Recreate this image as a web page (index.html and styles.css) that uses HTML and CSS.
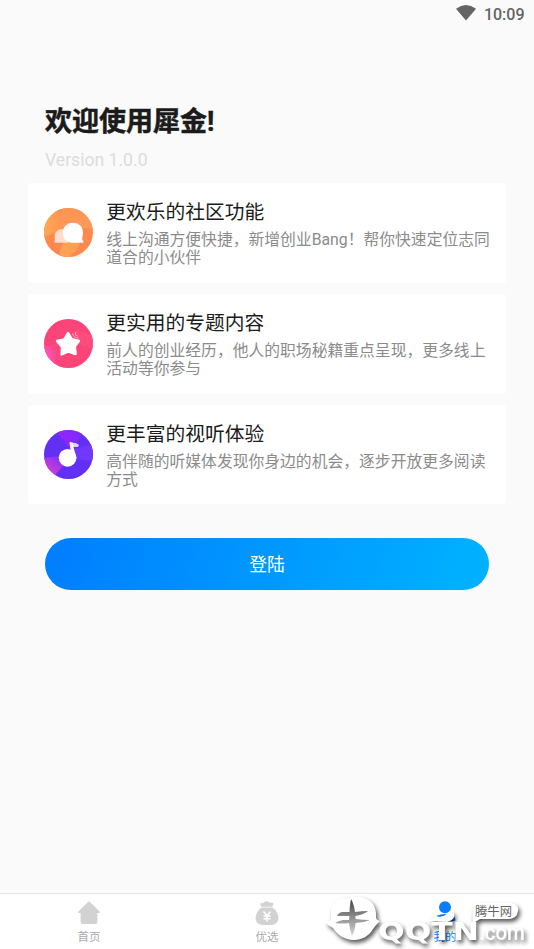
FILE: index.html
```html
<!DOCTYPE html>
<html lang="zh-CN">
<head>
<meta charset="utf-8">
<title>欢迎使用犀金</title>
<link rel="stylesheet" href="styles.css">
</head>
<body>
<div class="screen">
  <header class="status">
    <svg class="wifi" width="20" height="16" viewBox="0 0 20 16"><path d="M0 3.7Q10-3.7 20 3.7L10 15.6Z" fill="#646464"/></svg>
    <span>10:09</span>
  </header>
  <main class="content">
    <h1 class="title">欢迎使用犀金!</h1>
    <p class="version">Version 1.0.0</p>
    <section class="cards">
      <article class="card">
        <svg class="card-icon" viewBox="0 0 49 49">
          <defs>
            <clipPath id="disc"><circle cx="24.5" cy="24.5" r="24.5"/></clipPath>
            <linearGradient id="orangeA" x1="0" y1="0" x2="1" y2="0"><stop offset="0" stop-color="#ffa755"/><stop offset="1" stop-color="#ff9650"/></linearGradient>
            <linearGradient id="orangeB" x1="0" y1="0" x2="0" y2="1"><stop offset="0" stop-color="#ff9352"/><stop offset="1" stop-color="#ff9a5c"/></linearGradient>
          </defs>
          <g clip-path="url(#disc)">
            <path d="M0 0H49V49H0Z" fill="#ff884f"/>
            <path d="M0 0H11Q19 10 19 22L0 29Z" fill="url(#orangeA)"/>
            <path d="M11 0H49V21Q35 18 19 22Q18 9 11 0Z" fill="url(#orangeB)"/>
            <path d="M20 34H36Q33 44 25 49H15Q16 40 20 34Z" fill="#ffa152"/>
          </g>
          <path d="M11 34.8Q9.6 34.4 10.8 32.6V28.5C10.5 24.5 13.5 21.3 17.5 21.3C21.5 21.3 24 24 24 28V34.8Z" fill="#ffdccb"/>
          <path d="M29 14.8C35 14.8 39 19 39 24.8C39 27 38.2 29.5 38.2 31Q38.4 32.2 39.6 33.6Q40 34.8 38.4 34.8H28.5C22.5 34.8 18.8 30.5 18.8 25C18.8 19 23 14.8 29 14.8Z" fill="#fff"/>
        </svg>
        <div class="card-text"><h2>更欢乐的社区功能</h2><p>线上沟通方便快捷，新增创业Bang！帮你快速定位志同<br>道合的小伙伴</p></div>
      </article>
      <article class="card">
        <svg class="card-icon" viewBox="0 0 49 49">
          <defs><radialGradient id="pink" cx=".1" cy=".6" r=".6"><stop offset="0" stop-color="#ff57d5"/><stop offset="1" stop-color="#fb4680"/></radialGradient></defs>
          <g clip-path="url(#disc)">
            <path d="M0 0H49V49H0Z" fill="#fb4478"/>
            <path d="M0 28L18 23L16 49H0Z" fill="url(#pink)"/>
            <path d="M32 10L49 17V30L34 25Z" fill="#ff4c7d"/>
          </g>
          <path d="M24 14L27.8 20.2L35 21.8L30.8 27.6L31.6 35L24.5 32.5L17.6 35.5L18 28L13 22L20.5 20.4Z" fill="#fff" stroke="#fff" stroke-width="2.4" stroke-linejoin="round"/>
          <path d="M28.5 14.5Q29.5 19 34.5 19M32 13L31 15.5L33.5 17" fill="none" stroke="#ffb8cc" stroke-width="1"/>
        </svg>
        <div class="card-text"><h2>更实用的专题内容</h2><p>前人的创业经历，他人的职场秘籍重点呈现，更多线上<br>活动等你参与</p></div>
      </article>
      <article class="card">
        <svg class="card-icon" viewBox="0 0 49 49">
          <defs>
            <linearGradient id="violet" x1="0" y1="1" x2=".8" y2="0"><stop offset="0" stop-color="#f03fbd"/><stop offset=".7" stop-color="#9c36ee"/><stop offset="1" stop-color="#7a30fa"/></linearGradient>
            <linearGradient id="purple" x1="0" y1="0" x2="1" y2="0"><stop offset="0" stop-color="#9524ff"/><stop offset="1" stop-color="#7f2aff"/></linearGradient>
          </defs>
          <g clip-path="url(#disc)">
            <path d="M0 0H49V49H0Z" fill="#6230f5"/>
            <path d="M11 0H40L28 22Z" fill="url(#purple)"/>
            <path d="M28 20L49 14V31L31 29Z" fill="#7138ff"/>
            <path d="M0 28L17 26L22 33L10 46L0 43Z" fill="url(#violet)"/>
          </g>
          <circle cx="23.6" cy="27.8" r="8.9" fill="#fff"/>
          <path d="M25.5 13Q25.5 11.8 27 12.2L33.5 14Q34.8 14.5 34.5 15.8Q34 17.5 32 17L29.4 16.4L32.3 28L28 27.2Z" fill="#fff"/>
          <path d="M29 12.8L33.5 14Q34.8 14.5 34.5 15.8Q34 17.5 32 17L29.4 16.4Z" fill="#decfff"/>
        </svg>
        <div class="card-text"><h2>更丰富的视听体验</h2><p>高伴随的听媒体发现你身边的机会，逐步开放更多阅读<br>方式</p></div>
      </article>
    </section>
    <button class="login">登陆</button>
  </main>
  <nav class="tabs">
    <a class="tab">
      <svg width="24" height="24" viewBox="0 0 24 24"><path d="M12 1.5L22 11.2H19.5V21Q19.5 22 18.5 22H5.5Q4.5 22 4.5 21V11.2H2Z" fill="#d2d2d2" stroke="#d2d2d2" stroke-width="1.8" stroke-linejoin="round"/></svg>
      <span>首页</span>
    </a>
    <a class="tab">
      <svg width="24" height="24" viewBox="0 0 24 24"><path d="M6.5 5.8L5.3 3.2Q5 1.8 7 2Q9 2 9.5 1Q11.5-.5 13.5 1Q14.5 2 16.5 1.8Q19 1.5 18.4 3.2L17.2 5.8Z" fill="#d2d2d2"/><path d="M6.5 6.4H17.5C26 12.5 25 24 16.5 24H7.5C-1 24-2 12.5 6.5 6.4Z" fill="#d2d2d2"/><path d="M8.5 10.5L12 14.8L15.5 10.5M8.5 15H15.5M8.5 17.8H15.5M12 14.8V20.5" fill="none" stroke="#fff" stroke-width="1.6"/></svg>
      <span>优选</span>
    </a>
    <a class="tab active">
      <svg width="24" height="24" viewBox="0 0 24 24"><circle cx="12" cy="6.2" r="6" fill="#087fff"/><path d="M1.5 19Q2 13 12 13T22.5 19Q22.5 20 21 20H3Q1.5 20 1.5 19Z" fill="#087fff"/></svg>
      <span>我的</span>
    </a>
  </nav>
  <svg class="watermark" width="220" height="64" viewBox="0 0 220 64">
    <defs><linearGradient id="horn" x1="0" y1="0" x2="0" y2="1"><stop offset="0" stop-color="#444"/><stop offset="1" stop-color="#d9d9d9"/></linearGradient></defs>
    <g class="mark">
      <path d="M17 26C19 14 27 12 35 14Q38 11 43 12C56 12 63 20 62 32Q62 35 66 36Q61 41 59 44C55 51 48 55 40 55C29 55 22 48 19 43Q13 40 11 36Q17 37 17 33Z" fill="#fff"/>
      <text x="64" y="54.5" textLength="101" lengthAdjust="spacingAndGlyphs" class="brand">QQTN</text>
      <text x="165" y="54.5" textLength="46" lengthAdjust="spacingAndGlyphs" class="domain">.com</text>
      <path d="M116 36Q117 31 122 31Q128 33 133 29Q135 25 139 27Q143 34 133 37Z" fill="#fff"/>
      <path d="M163 18H195Q205 18 204 26Q203 34 194 34H166L159 38Q157 22 163 18Z" fill="#fff"/>
    </g>
    <path d="M37 14Q35.5 22 35.5 27H29Q25 27 23 31Q28 31 35.5 31L35 35H29Q24 36 21 38Q28 39 35 38Q36 46 38 51Q41 46 41.5 38Q49 38 56 35Q49 35 41.5 34V31Q49 30 54 26Q48 26 41 27Q40 19 37 14Z" fill="url(#horn)"/>
    <text x="161" y="31" textLength="37" lengthAdjust="spacingAndGlyphs" class="site">腾牛网</text>
  </svg>
</div>
</body>
</html>
```
FILE: styles.css
```css
* { box-sizing: border-box; }
body {
  margin: 0;
  background: #fafafa;
  font-family: Roboto, "Noto Sans CJK SC", sans-serif;
}
h1, h2, p { margin: 0; }
.screen {
  position: relative;
  display: flex;
  flex-direction: column;
  height: 949px;
  overflow: hidden;
}
.status {
  display: flex;
  align-items: center;
  justify-content: flex-end;
  gap: 8px;
  height: 28px;
  padding-right: 9.5px;
  color: #646464;
  font-size: 16px;
  font-weight: 500;
}
.wifi { margin-bottom: 2px; }
.content { flex: 1; padding: 74px 28px 0; }
.title {
  padding-left: 17px;
  color: #1b1b1b;
  font-size: 27px;
  line-height: 40px;
  font-weight: 700;
  -webkit-text-stroke: .5px #1b1b1b;
}
.version {
  padding-left: 17px;
  margin-top: 8px;
  color: #dcdcdc;
  font-size: 17.6px;
  line-height: 21px;
}
.cards {
  display: flex;
  flex-direction: column;
  gap: 11px;
  margin-top: 12px;
}
.card {
  display: flex;
  align-items: center;
  height: 99.8px;
  padding-left: 16px;
  background: #fff;
  border-radius: 4px;
}
.card-icon { width: 49px; height: 49px; margin-right: 13.3px; flex: none; }
.card-text { white-space: nowrap; padding-top: 1px; }
.card h2 {
  color: #1b1b1b;
  font-size: 19.75px;
  font-weight: 400;
  line-height: 28px;
  margin-bottom: 4px;
}
.card p { color: #8b8b8b; font-size: 15.8px; line-height: 18.3px; }
.login {
  display: block;
  width: 444px;
  height: 52px;
  margin: 34px 0 0 17px;
  padding: 0 0 2px;
  border: 0;
  border-radius: 26px;
  background: linear-gradient(110deg, #007dff, #00b3ff);
  color: #fff;
  font: inherit;
  font-size: 17.8px;
}
.tabs {
  display: flex;
  height: 56px;
  border-top: 1px solid #e5e5e5;
  background: #fff;
}
.tab {
  flex: 1;
  display: flex;
  flex-direction: column;
  align-items: center;
  padding-top: 7px;
  color: #a9a9a9;
  font-size: 11.5px;
  line-height: 17px;
}
.tab span { margin-top: 4px; }
.active { color: #087fff; }
.watermark { position: absolute; right: 0; bottom: 0; }
.mark { filter: drop-shadow(2px 3px 2px rgba(0, 0, 0, .65)); }
.brand {
  fill: #fff;
  font: 700 25px "DejaVu Sans", sans-serif;
}
.domain { fill: #fff; font: 500 22px Roboto, sans-serif; }
.site { fill: #666; font: 12.5px "Noto Sans CJK SC", sans-serif; }
```
